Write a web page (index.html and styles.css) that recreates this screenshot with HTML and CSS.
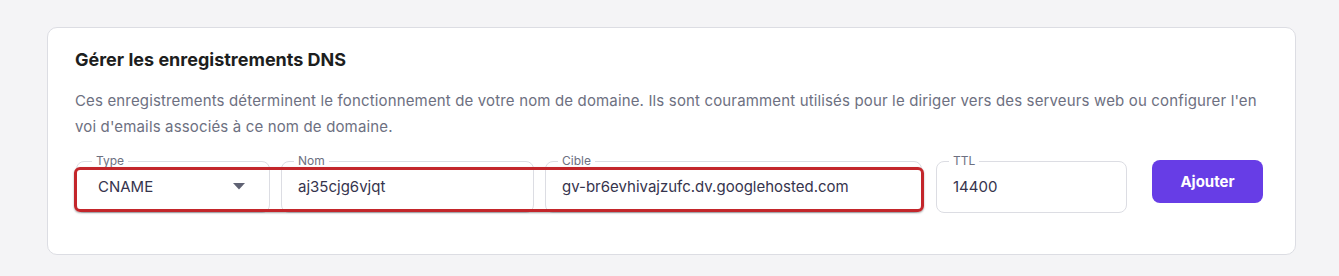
FILE: index.html
```html
<!DOCTYPE HTML>
<html>

<head>
    <meta charset="utf-8">
    <link rel="stylesheet" href="styles.css">
</head>

<body>
    <div class='card'>
        <h2 class='title'>Gérer les enregistrements DNS</h2>
        <p class='desc'>Ces enregistrements déterminent le fonctionnement de votre nom de domaine. Ils sont couramment utilisés pour le diriger vers des serveurs web ou configurer l'en voi d'emails associés à ce nom de domaine.</p>

        <div class='row'>
            <fieldset class='field field-type'>
                <legend>Type</legend>
                <div class='select'>
                    <span>CNAME</span>
                    <svg class='caret' width='12' height='7' viewBox='0 0 12 7'><path d='M0 0h12L6 6.5z' fill='#5f6273' /></svg>
                </div>
            </fieldset>
            <fieldset class='field field-name'>
                <legend>Nom</legend>
                <input value='aj35cjg6vjqt' />
            </fieldset>
            <fieldset class='field field-target'>
                <legend>Cible</legend>
                <input value='gv-br6evhivajzufc.dv.googlehosted.com' />
            </fieldset>
            <fieldset class='field field-ttl'>
                <legend>TTL</legend>
                <input value='14400' />
            </fieldset>
            <button class='add'>Ajouter</button>

            <div class='highlight'></div>
        </div>
    </div>
</body>

</html>
```

FILE: styles.css
```css
body {
    margin: 0;
    padding: 27px 43px 0 47px;
    background: #f4f4f6;
    font-family: "Inter", "Liberation Sans", sans-serif;
    color: #1d1e20;
}

.card {
    background: #fff;
    border: 1px solid #dcdde3;
    border-radius: 10px;
    padding: 18px 28px 40px 27px;
    height: 168px;
}

.title {
    margin: 0;
    font-size: 18px;
    font-weight: 700;
    line-height: 28px;
    letter-spacing: 0;
}

.desc {
    margin: 14px 0 0 0;
    font-size: 15px;
    line-height: 26px;
    color: #6d7081;
    width: 1200px;
    letter-spacing: 0.15px;
}

.row {
    position: relative;
    display: flex;
    align-items: flex-start;
    margin-top: 13px;
    margin-left: 1px;
}

.field {
    margin: 0;
    padding: 0 12px 0 12px;
    border: 1px solid #dcdde3;
    border-radius: 8px;
    height: 60px;
    box-sizing: border-box;
}

.field legend {
    padding: 0 4px;
    font-size: 12px;
    line-height: 16px;
    color: #6d7081;
}

.field input {
    border: 0;
    outline: none;
    background: transparent;
    font-family: inherit;
    font-size: 15px;
    color: #36344d;
    padding: 0 4px;
    height: 34px;
    width: 100%;
    box-sizing: border-box;
}

.field-type {
    width: 194px;
    margin-right: 11px;
}

.field-type legend {
    margin-left: 3px;
}

.select {
    display: flex;
    align-items: center;
    justify-content: space-between;
    height: 34px;
    padding: 0 12px 0 9px;
    font-size: 15px;
    color: #36344d;
}

.field-name {
    width: 253px;
    margin-right: 11px;
}

.field-target {
    width: 377px;
    margin-right: 14px;
}

.field-ttl {
    width: 191px;
    margin-right: 25px;
}

.add {
    margin-top: 7px;
    width: 111px;
    height: 43px;
    border: 0;
    border-radius: 8px;
    background: #673de6;
    color: #fff;
    font-family: inherit;
    font-size: 15px;
    font-weight: 700;
}

.highlight {
    position: absolute;
    left: -2px;
    top: 14px;
    width: 850px;
    height: 45px;
    box-sizing: border-box;
    border: 3px solid #c3262b;
    border-radius: 6px;
    box-shadow: 0 1px 2px rgba(0, 0, 0, 0.35);
}
```
